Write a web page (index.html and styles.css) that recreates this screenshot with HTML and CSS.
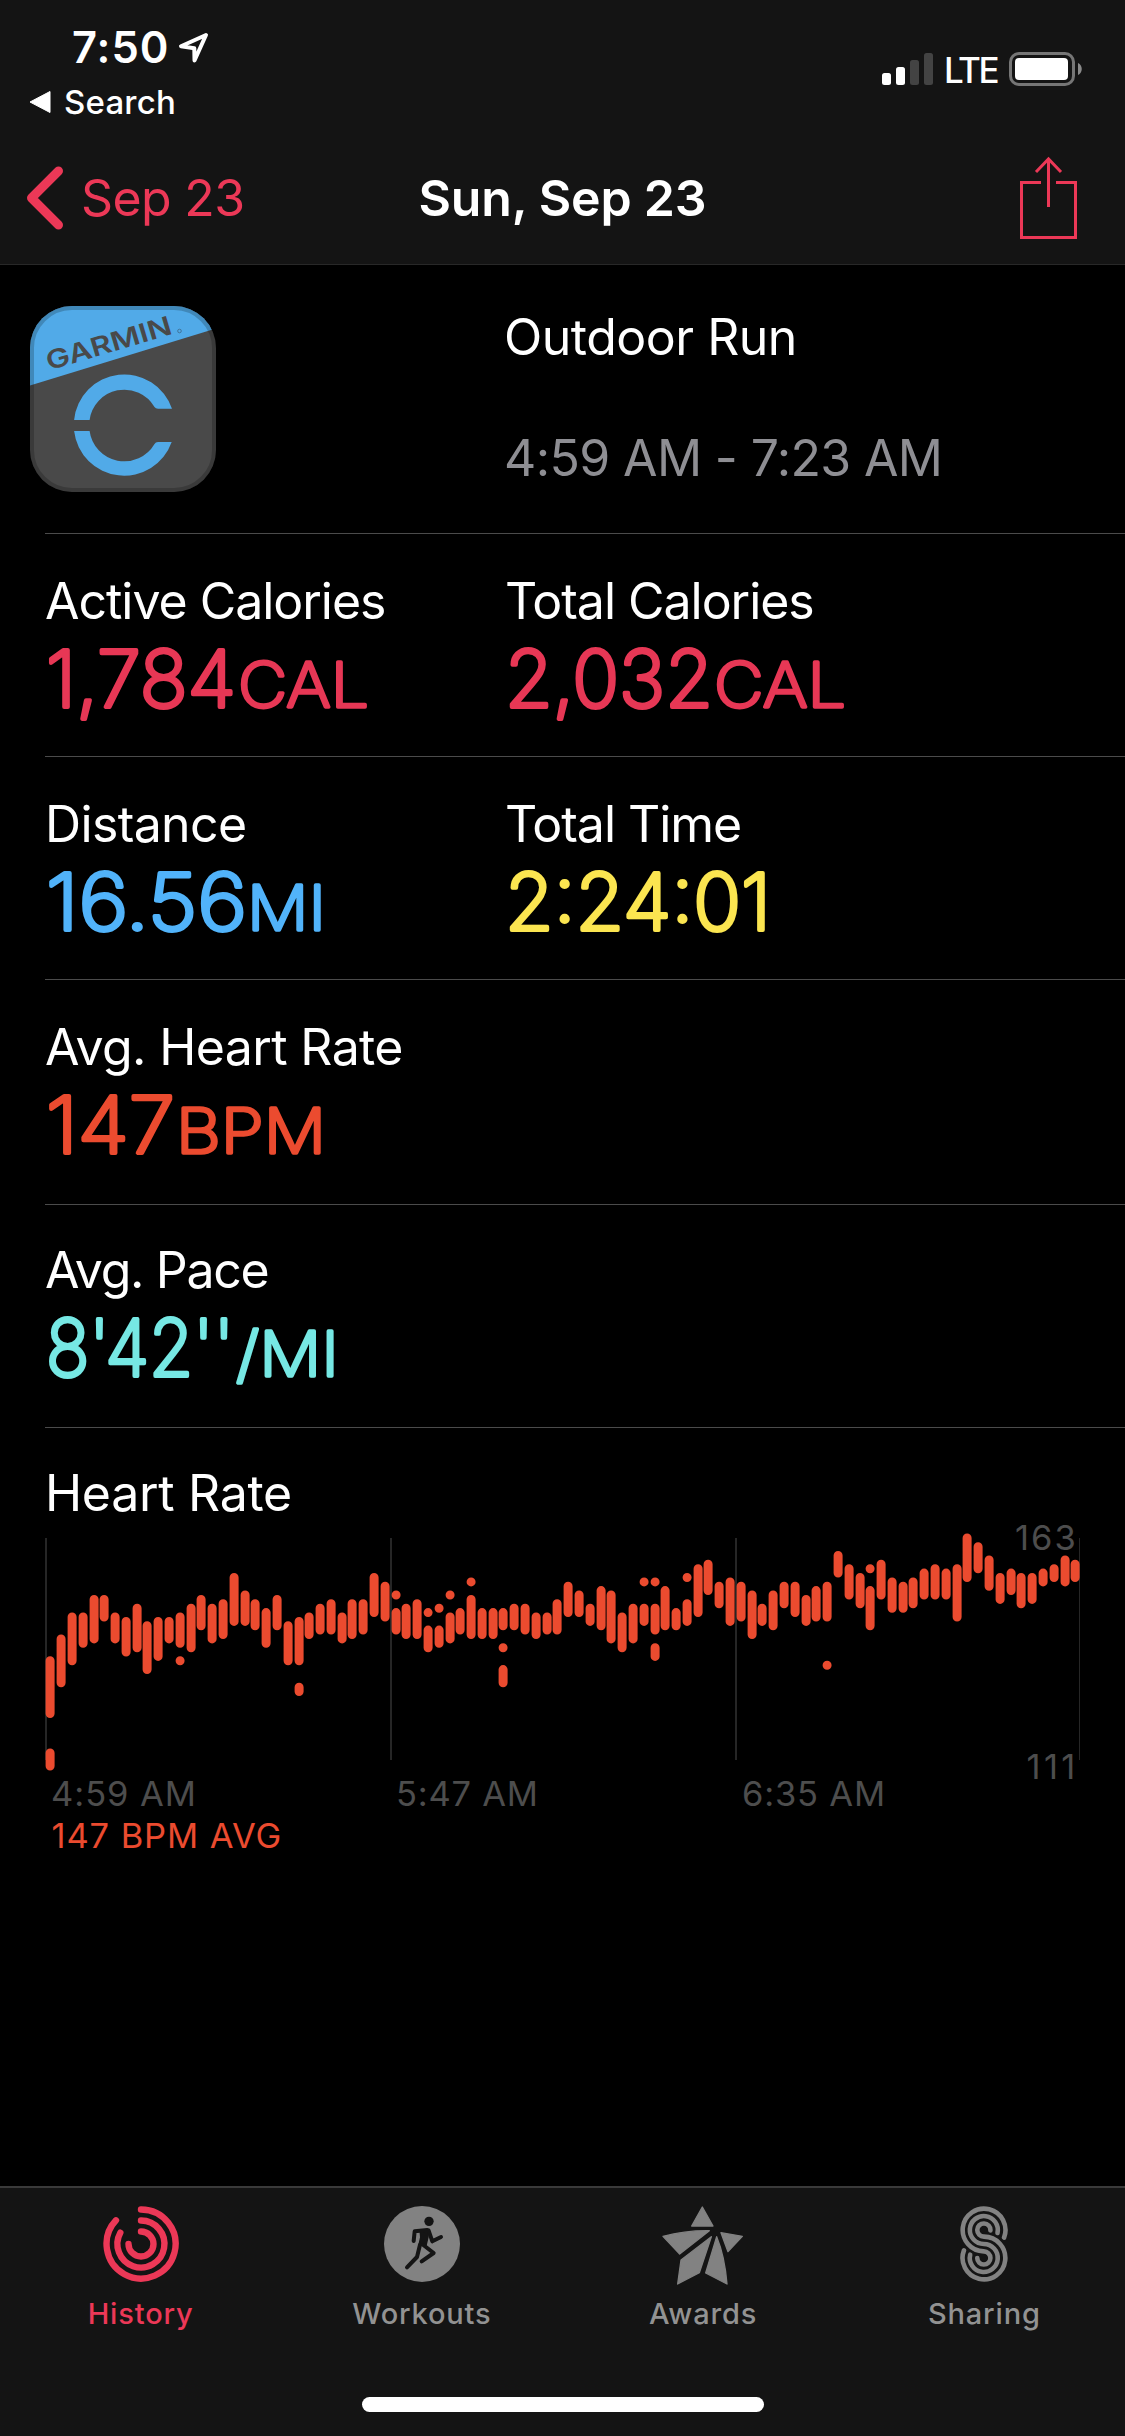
FILE: index.html
```
<!DOCTYPE html>
<html lang="en">
<head>
    <meta charset="utf-8">
    <meta name="viewport" content="width=device-width">
    <title>Sun, Sep 23</title>
    <link rel="stylesheet" href="styles.css">
</head>
<body>
    <header>
        <div class="status">
            <div class="status-left">
                <div class="clock">7:50
                    <svg class="location" width="32" height="32" viewBox="0 0 32 32"><path d="M29 4L4 15.3L17.3 17.2L17.5 29.5Z"/></svg>
                </div>
                <div class="back-app">
                    <svg width="22" height="24" viewBox="0 0 22 24"><path d="M1 12L21 1.5V22.5Z"/></svg>
                    Search
                </div>
            </div>
            <div class="status-right">
                <svg width="51" height="32" viewBox="0 0 51 32">
                    <rect x="0" y="20" width="9" height="12" rx="2.5" fill="#fff"/>
                    <rect x="14" y="14" width="9" height="18" rx="2.5" fill="#fff"/>
                    <rect x="28" y="7" width="9" height="25" rx="2.5" fill="#434343"/>
                    <rect x="42" y="0" width="9" height="32" rx="2.5" fill="#434343"/>
                </svg>
                <span class="lte">LTE</span>
                <svg width="74" height="34" viewBox="0 0 74 34">
                    <rect x="1.5" y="1.5" width="63" height="31" rx="8.5" fill="none" stroke="#767676" stroke-width="3"/>
                    <rect x="6" y="6" width="53" height="22" rx="4" fill="#fff"/>
                    <path d="M69 11C74 13 74 21 69 23Z" fill="#8a8a8a"/>
                </svg>
            </div>
        </div>
        <nav>
            <a class="back">
                <svg width="38" height="64" viewBox="0 0 38 64"><path d="M32.5 5L5.5 32L32.5 59"/></svg>
                Sep 23
            </a>
            <h1>Sun, Sep 23</h1>
            <a class="share">
                <svg width="58" height="84" viewBox="0 0 58 84"><path d="M21 26.5H1.5V81.5H55.5V26.5H36M28.5 3V51M16 16L28.5 3L41 16"/></svg>
            </a>
        </nav>
    </header>

    <main>
        <section class="summary">
            <svg class="app-icon" width="186" height="186" viewBox="0 0 186 186">
                <clipPath id="icon-shape"><rect width="186" height="186" rx="42"/></clipPath>
                <g clip-path="url(#icon-shape)">
                    <rect width="186" height="186" fill="#494949"/>
                    <path d="M0 0H186V22.5L0 79.5Z" fill="#51aae8"/>
                    <path d="M44.1 114A50.4 50.4 0 0 1 142 102.7H128Q125.6 102.7 124.5 101A35 35 0 0 0 59.6 114Z" fill="#51aae8"/>
                    <path d="M44.1 125A50.4 50.4 0 0 0 141.7 136H128Q125.6 136 124.5 138A35 35 0 0 1 59.6 125Z" fill="#51aae8"/>
                    <text class="brand" x="0" y="0" textLength="130" lengthAdjust="spacingAndGlyphs" transform="translate(19 64.5) rotate(-16.5)">GARMIN</text>
                    <circle cx="149.5" cy="25" r="1.8" fill="none" stroke="#41749a"/>
                </g>
                <rect x="2" y="2" width="182" height="182" rx="40" fill="none" stroke="#000" stroke-opacity=".2" stroke-width="4"/>
            </svg>
            <div class="summary-text">
                <div class="label outdoor">Outdoor Run</div>
                <div class="label time">4:59 AM - 7:23 AM</div>
            </div>
        </section>

        <section class="row">
            <div>
                <div class="label tight">Active Calories</div>
                <svg class="value calories" width="400" height="90">
                    <text x="1" y="76" textLength="190" lengthAdjust="spacingAndGlyphs">1,784</text>
                    <text class="unit" x="193" y="76" textLength="131" lengthAdjust="spacingAndGlyphs">CAL</text>
                </svg>
            </div>
            <div>
                <div class="label tight">Total Calories</div>
                <svg class="value calories" width="400" height="90">
                    <text x="0" y="76" textLength="208" lengthAdjust="spacingAndGlyphs">2,032</text>
                    <text class="unit" x="209" y="76" textLength="132" lengthAdjust="spacingAndGlyphs">CAL</text>
                </svg>
            </div>
        </section>
        <section class="row">
            <div>
                <div class="label">Distance</div>
                <svg class="value distance" width="400" height="90">
                    <text x="1" y="76" textLength="201" lengthAdjust="spacingAndGlyphs">16.56</text>
                    <text class="unit" x="202" y="76" textLength="79" lengthAdjust="spacingAndGlyphs">MI</text>
                </svg>
            </div>
            <div>
                <div class="label tight">Total Time</div>
                <svg class="value duration" width="400" height="90">
                    <text x="0" y="76" textLength="266" lengthAdjust="spacingAndGlyphs">2:24:01</text>
                </svg>
            </div>
        </section>
        <section class="row tall">
            <div>
                <div class="label">Avg. Heart Rate</div>
                <svg class="value heart" width="400" height="90">
                    <text x="1" y="76" textLength="129" lengthAdjust="spacingAndGlyphs">147</text>
                    <text class="unit" x="131" y="76" textLength="150" lengthAdjust="spacingAndGlyphs">BPM</text>
                </svg>
            </div>
        </section>
        <section class="row pace-row">
            <div>
                <div class="label pace-label">Avg. Pace</div>
                <svg class="value pace" width="400" height="90">
                    <text x="1" y="76" textLength="188" lengthAdjust="spacingAndGlyphs">8'42''</text>
                    <text class="unit" x="191" y="76" textLength="103" lengthAdjust="spacingAndGlyphs">/MI</text>
                </svg>
            </div>
        </section>

        <section class="chart">
            <div class="label chart-label">Heart Rate</div>
            <svg width="1125" height="340" viewBox="0 0 1125 340">
                <path class="grid" d="M46 15V237M391 15V237M736 15V237"/>
                <path class="grid thin" d="M1079.5 15V237"/>
                <path id="bars"/>
                <text x="51" y="283" letter-spacing=".95">4:59 AM</text>
                <text x="396" y="283" letter-spacing=".75">5:47 AM</text>
                <text x="742" y="283" letter-spacing=".8">6:35 AM</text>
                <text x="1015" y="27" letter-spacing="2">163</text>
                <text x="1026.5" y="256" letter-spacing="3.4">111</text>
                <text class="avg" x="51.5" y="325" letter-spacing=".9">147 BPM AVG</text>
            </svg>
        </section>
    </main>

    <footer>
        <div class="tabs">
            <a class="tab active">
                <svg width="76" height="76" viewBox="-38 -38 76 76">
                    <g fill="none" stroke="#ec3857" stroke-width="6.4" stroke-linecap="round">
                        <path d="M0 -34.5A34.5 34.5 0 1 1 -25 -23.7"/>
                        <path d="M0 -23.5A23.5 23.5 0 1 1 -20.7 -11.3"/>
                        <path d="M0 -12.5A12.5 12.5 0 1 1 -12.5 0"/>
                    </g>
                </svg>
                History
            </a>
            <a class="tab">
                <svg width="76" height="76" viewBox="0 0 228 228">
                    <circle cx="114" cy="114" r="114" fill="#828282"/>
                    <circle cx="135" cy="46" r="14" fill="#141414"/>
                    <path d="M106 70H136L134 94L128 119L102 120L108 94Z" fill="#141414"/>
                    <path d="M130 72L92 76L89 105M134 74L145 106L171 93M108 116L99 153L69 184M118 117L149 141L113 166" fill="none" stroke="#141414" stroke-width="12" stroke-linecap="round" stroke-linejoin="round"/>
                </svg>
                Workouts
            </a>
            <a class="tab">
                <svg width="82" height="80" viewBox="0 0 246 240">
                    <g fill="#828282" stroke="#828282" stroke-width="4" stroke-linejoin="round">
                        <path d="M121 3L153 60H89Z"/>
                        <path d="M3 91Q70 73 142 74L53 144Z"/>
                        <path d="M148 92L57 162L47 234L112 200Z"/>
                        <path d="M164 92Q188 150 195 234L131 201Z"/>
                        <path d="M177 80L241 91L198 137Z"/>
                    </g>
                </svg>
                Awards
            </a>
            <a class="tab">
                <svg width="48" height="77" viewBox="0 0 144 231">
                    <g fill="none" stroke="#828282" stroke-width="14" stroke-linecap="round">
                        <path d="M133 96A65 65 0 1 0 71.5 138A20 20 0 1 1 51.5 158"/>
                        <path d="M113 82A42.5 42.5 0 1 0 71.5 115.5A42.5 42.5 0 1 1 30 148"/>
                        <path d="M91.5 74A20 20 0 1 0 71.5 93A65 65 0 1 1 11 135"/>
                    </g>
                </svg>
                Sharing
            </a>
        </div>
        <div class="home"></div>
    </footer>

    <script>
        // high/low pairs for each bucket, a bucket may hold several ranges
        var rates = [
            [135,123,114,111], [140,130], [145,135], [145,139], [149,140], [149,145], [145,140], [144,137],
            [147,138], [143,133], [144,136], [144,140], [145,139,135,135], [147,138], [149,143], [147,140],
            [148,141], [154,144], [150,144], [148,143], [146,139], [149,143], [143,135], [144,135,129,128],
            [145,141], [147,142], [148,142], [145,140], [148,141], [148,142], [154,146], [152,145],
            [150,150,146,142], [147,141], [148,141], [146,146,142,138], [147,147,142,139], [150,150,145,140], [146,142], [153,153,149,141],
            [146,141], [146,141], [146,143,138,138,133,130], [147,143], [147,142], [145,141], [145,142], [148,142],
            [152,146], [150,146], [147,144], [151,143], [150,140], [145,138], [147,140], [153,153,147,144],
            [153,153,147,142,138,136], [151,143], [146,143], [154,154,148,144], [156,146], [157,151], [152,148], [153,144],
            [152,145], [150,141], [147,144], [150,143], [152,148], [152,146], [149,144], [151,145],
            [152,145,134,134], [159,155], [156,150], [154,148], [156,156,151,143], [157,150], [153,147], [152,147],
            [153,148], [155,150], [156,150], [155,150], [156,145], [163,154], [161,156], [158,152],
            [154,149], [155,151], [154,148], [154,149], [155,153], [156,154], [158,153], [157,154]
        ];
        var d = '';
        function y(bpm) {
            return (15 + (163 - bpm) * 4.387).toFixed(1);
        }
        for (var i = 0; i < rates.length; i++) {
            var x = Math.round(50.36 + i * 10.789) + 0.1;
            for (var j = 0; j < rates[i].length; j += 2) {
                d += 'M' + x + ' ' + y(rates[i][j]) + 'V' + (+y(rates[i][j + 1]) + 0.01);
            }
        }
        document.getElementById('bars').setAttribute('d', d);
    </script>
</body>
</html>
```
FILE: styles.css
```
* {
    box-sizing: border-box;
}
body {
    margin: 0;
    width: 1125px;
    height: 2436px;
    display: flex;
    flex-direction: column;
    background: #000;
    color: #fff;
    font-family: Inter, "Liberation Sans", sans-serif;
}
svg {
    display: block;
    flex: none;
}

/* header */
header {
    height: 265px;
    background: #141414;
    border-bottom: 1px solid #282828;
}
.status {
    height: 132px;
    display: flex;
    justify-content: space-between;
}
.status-left {
    padding-top: 17px;
}
.clock {
    display: flex;
    gap: 7px;
    padding-left: 72px;
    font-size: 43.5px;
    font-weight: 600;
    line-height: 60px;
    letter-spacing: 1px;
}
.location {
    margin-top: 14px;
    fill: none;
    stroke: #fff;
    stroke-width: 4;
    stroke-linejoin: round;
}
.back-app {
    display: flex;
    align-items: center;
    gap: 13px;
    padding-left: 29px;
    font-size: 33px;
    font-weight: 450;
    line-height: 50px;
    letter-spacing: .2px;
}
.back-app svg {
    fill: #fff;
    stroke: #fff;
    stroke-linejoin: round;
}
.status-right {
    display: flex;
    align-items: flex-start;
    padding: 53px 42px 0 0;
}
.lte {
    width: 76px;
    padding-left: 11px;
    font-size: 35px;
    font-weight: 450;
    line-height: 35px;
    letter-spacing: -2.4px;
}
.status-right svg:last-child {
    margin-top: -1px;
}
nav {
    display: grid;
    grid-template-columns: 1fr auto 1fr;
    padding: 36px 47px 0 26px;
    font-size: 50px;
    line-height: 60px;
}
.back {
    display: flex;
    gap: 17px;
    color: #ec3857;
    letter-spacing: -.65px;
}
.back svg {
    margin-top: -2px;
    fill: none;
    stroke: #ec3857;
    stroke-width: 9;
    stroke-linecap: round;
    stroke-linejoin: round;
}
h1 {
    margin: 0 0 0 21px;
    font-size: 50px;
    font-weight: 600;
    letter-spacing: -.2px;
}
.share svg {
    margin: -12px 0 0 auto;
    fill: none;
    stroke: #ec3857;
    stroke-width: 3;
}

/* workout details */
main {
    flex: 1;
}
.label {
    font-size: 50px;
    line-height: 60px;
    letter-spacing: -.63px;
    white-space: nowrap;
}
.tight {
    letter-spacing: -1.03px;
}
.outdoor {
    letter-spacing: -.5px;
}
.summary {
    display: flex;
    height: 269px;
    position: relative;
    padding: 41px 0 0 30px;
}
.summary::after {
    content: "";
    position: absolute;
    left: 45px;
    right: 0;
    bottom: 0;
    height: 1px;
    background: #4b4b4b;
}
.summary-text {
    padding: 1px 0 0 288px;
}
.time {
    margin-top: 61px;
    color: #8e8e93;
}
.brand {
    font-size: 26px;
    font-weight: 600;
    fill: #494949;
}
.row {
    display: grid;
    grid-template-columns: 460px 1fr;
    height: 223px;
    margin-left: 45px;
    padding-top: 37px;
    border-bottom: 1px solid #4b4b4b;
}
.tall {
    height: 225px;
}
.pace-row {
    padding-top: 35px;
}
.pace-label {
    letter-spacing: -1.3px;
}
/* light weight with a round stroke gives the rounded terminals */
.value {
    overflow: visible;
    font-size: 78.5px;
    font-weight: 200;
    stroke-width: 4;
    stroke-linejoin: round;
}
.unit {
    font-size: 62px;
    font-weight: 200;
    stroke-width: 3.4;
}
.calories { fill: #e73755; stroke: #e73755; }
.distance { fill: #51b3fa; stroke: #51b3fa; }
.duration { fill: #fbe550; stroke: #fbe550; }
.heart { fill: #eb4b2f; stroke: #eb4b2f; }
.pace { fill: #76e8e4; stroke: #76e8e4; }

/* chart */
.chart {
    padding-top: 35px;
}
.chart-label {
    padding-left: 45px;
    letter-spacing: -.3px;
}
.chart text {
    font-size: 34.5px;
    fill: #4d4d4d;
}
.chart .avg {
    fill: #eb4b2f;
}
.grid {
    stroke: #262626;
    stroke-width: 2;
}
.thin {
    stroke-width: 1;
}
#bars {
    fill: none;
    stroke: #eb4b2f;
    stroke-width: 9;
    stroke-linecap: round;
}

/* tab bar */
footer {
    height: 250px;
    background: #141414;
    border-top: 2px solid #3a3a3a;
}
.tabs {
    display: grid;
    grid-template-columns: repeat(4, 1fr);
    height: 209px;
    padding-top: 18px;
}
.tab {
    display: flex;
    flex-direction: column;
    align-items: center;
    color: #929292;
    font-size: 29px;
    font-weight: 500;
    line-height: 40px;
    letter-spacing: .85px;
}
.tab svg {
    height: 80px;
    margin-bottom: 8px;
}
.tab:nth-child(1) svg,
.tab:nth-child(2) svg,
.tab:nth-child(4) svg {
    height: 76px;
    margin-bottom: 12px;
}
.active {
    color: #ec3857;
}
.home {
    width: 402px;
    height: 15px;
    margin: 0 auto;
    border-radius: 8px;
    background: #fff;
}
```
